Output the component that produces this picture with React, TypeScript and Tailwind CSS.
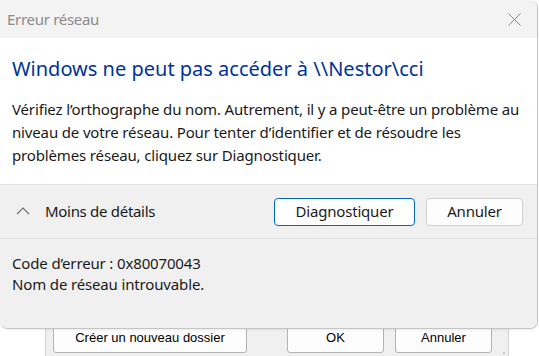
import React from "react";

const segoe = { fontFamily: '"Noto Sans", "Open Sans", sans-serif' };

export default function App() {
  return (
    <div className="relative w-[539px] h-[356px] overflow-hidden bg-white">
      {/* background window peeking below */}
      <div
        className="absolute left-[45px] top-[300px] w-[464px] h-[60px] bg-[#f0f0f0] border-l border-r border-[#d4d4d4] flex items-end gap-0 pb-[7px] pl-[7px]"
        style={{ fontFamily: '"Liberation Sans", Arial, sans-serif' }}
      >
        <div className="w-[194px] h-[40px] bg-[#fdfdfd] border border-[#b4b4b4] rounded-[3px] flex items-end justify-center pb-[5px] text-[13px] text-black">
          Créer un nouveau dossier
        </div>
        <div className="ml-[40px] w-[97px] h-[40px] bg-[#fdfdfd] border border-[#b4b4b4] rounded-[3px] flex items-end justify-center pb-[5px] text-[13px] text-black">
          OK
        </div>
        <div className="ml-[11px] w-[97px] h-[40px] bg-[#fdfdfd] border border-[#b4b4b4] rounded-[3px] flex items-end justify-center pb-[5px] text-[13px] text-black">
          Annuler
        </div>
      </div>
      <div className="absolute left-[503px] top-[352px] w-[2px] h-[2px] bg-[#c8c8c8]" />

      {/* dialog */}
      <div
        className="absolute left-0 top-0 w-[538px] h-[329px] flex flex-col rounded-tr-lg rounded-b-lg border border-t-0 border-l-0 border-[#c4c4c4] overflow-hidden bg-white shadow-[0_1px_3px_rgba(0,0,0,0.08)]"
        style={segoe}
      >
        <div className="h-[38px] shrink-0 bg-[#f3f3f3] flex items-center justify-between pl-[7px] pr-[16px]">
          <span className="text-[15px] tracking-[-0.3px] text-[#8b8b8b] leading-none">Erreur réseau</span>
          <svg width="13" height="13" viewBox="0 0 13 13" className="mt-[1px]">
            <path d="M0.5 0.5 L12.5 12.5 M12.5 0.5 L0.5 12.5" stroke="#8a8a8a" strokeWidth="1" fill="none" />
          </svg>
        </div>
        <div className="h-[146px] shrink-0 bg-white pl-[12px] pt-[17px]">
          <div className="text-[20px] leading-[28px] text-[#003399]">
            Windows ne peut pas accéder à \\Nestor\cci
          </div>
          <div className="mt-[15px] text-[15px] tracking-[-0.15px] leading-[23px] text-[#1a1a1a]">
            Vérifiez l’orthographe du nom. Autrement, il y a peut-être un problème au
            <br />
            niveau de votre réseau. Pour tenter d’identifier et de résoudre les
            <br />
            problèmes réseau, cliquez sur Diagnostiquer.
          </div>
        </div>
        <div className="h-[55px] shrink-0 bg-[#f0f0f0] border-t border-b border-[#e0e0e0] flex items-center pl-[16px] pr-[14px]">
          <svg width="14" height="8" viewBox="0 0 14 8" className="mt-[-2px]">
            <path d="M1 7 L7 1 L13 7" stroke="#707070" strokeWidth="1.1" fill="none" />
          </svg>
          <span className="ml-[15px] text-[15px] tracking-[-0.3px] text-[#1a1a1a]">Moins de détails</span>
          <div className="ml-auto flex gap-[11px]">
            <button className="w-[141px] h-[28px] bg-white border border-[#0067c0] rounded-[4px] text-[15px] tracking-[-0.2px] text-[#1a1a1a] leading-none">
              Diagnostiquer
            </button>
            <button className="w-[97px] h-[28px] bg-[#fdfdfd] border border-[#d0d0d0] rounded-[4px] text-[15px] tracking-[-0.2px] text-[#1a1a1a] leading-none">
              Annuler
            </button>
          </div>
        </div>
        <div className="flex-1 bg-[#f0f0f0] pl-[12px] pt-[14px] text-[15px] tracking-[-0.15px] leading-[21px] text-[#1a1a1a]">
          <div>Code d’erreur : 0x80070043</div>
          <div>Nom de réseau introuvable.</div>
        </div>
      </div>
    </div>
  );
}
